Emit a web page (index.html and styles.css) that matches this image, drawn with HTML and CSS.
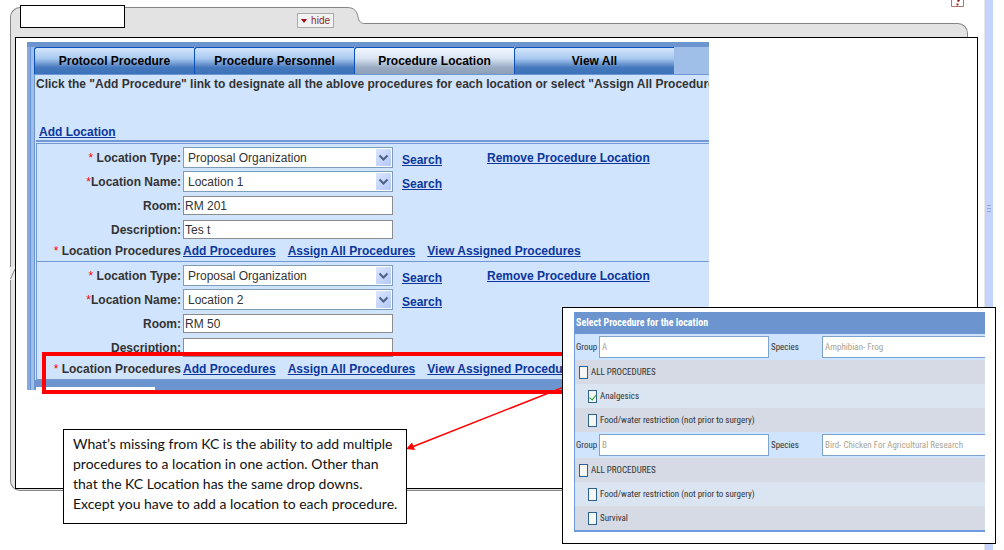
FILE: index.html
```html
<!DOCTYPE html>
<html lang="en">
<head>
<meta charset="utf-8">
<title>Procedure Location</title>
<link rel="stylesheet" href="styles.css">
</head>
<body>
<div class="page">
  <main class="folder">
    <header class="folder-head">
      <div class="folder-tab"><button class="hide-btn" type="button"><svg width="6" height="4" viewBox="0 0 6 4"><path d="M0 0h6L3 4z" fill="#a30d12"/></svg>hide</button></div>
      <svg class="folder-curve" width="22" height="30" viewBox="0 0 22 30"><path d="M0 .5C8 .5 10 5 11 10s3 6.500 7 6.500H22V30H0z" fill="#e3e3e3"/><path d="M0 .5C8 .5 10 5 11 10s3 6.500 7 6.500H22" fill="none" stroke="#858585"/></svg>
      <div class="folder-edge"></div>
    </header>
    <div class="folder-body">
      <div class="sheet">
        <section class="app">
          <nav class="tabs">
            <button type="button" class="tab">Protocol Procedure</button>
            <button type="button" class="tab">Procedure Personnel</button>
            <button type="button" class="tab current">Procedure Location</button>
            <button type="button" class="tab">View All</button>
          </nav>
          <div class="content">
            <div class="intro">
              <p>Click the "Add Procedure" link to designate all the ablove procedures for each location or select "Assign All Procedures</p>
              <a href="#">Add Location</a>
            </div>
            <div class="groups">
              <form class="group">
                <div class="row"><label for="type1"><i>*</i> Location Type:</label><span class="pick"><select id="type1"><option>Proposal Organization</option></select><svg width="15" height="17" viewBox="0 0 15 17"><path d="M3.500 6.500l4 4 4-4" fill="none" stroke="#4d6185" stroke-width="2"/></svg></span><a class="search" href="#">Search</a><a href="#">Remove Procedure Location</a></div>
                <div class="row"><label for="name1"><i>*</i>Location Name:</label><span class="pick"><select id="name1"><option>Location 1</option></select><svg width="15" height="17" viewBox="0 0 15 17"><path d="M3.500 6.500l4 4 4-4" fill="none" stroke="#4d6185" stroke-width="2"/></svg></span><a class="search" href="#">Search</a></div>
                <div class="row"><label for="room1">Room:</label><input id="room1" type="text" value="RM 201"></div>
                <div class="row"><label for="desc1">Description:</label><input id="desc1" type="text" value="Tes t"></div>
                <div class="row actions"><span class="caption"><i>*</i> Location Procedures</span><span class="links"><a href="#">Add Procedures</a><a href="#">Assign All Procedures</a><a href="#">View Assigned Procedures</a></span></div>
              </form>
              <form class="group">
                <div class="row"><label for="type2"><i>*</i> Location Type:</label><span class="pick"><select id="type2"><option>Proposal Organization</option></select><svg width="15" height="17" viewBox="0 0 15 17"><path d="M3.500 6.500l4 4 4-4" fill="none" stroke="#4d6185" stroke-width="2"/></svg></span><a class="search" href="#">Search</a><a href="#">Remove Procedure Location</a></div>
                <div class="row"><label for="name2"><i>*</i>Location Name:</label><span class="pick"><select id="name2"><option>Location 2</option></select><svg width="15" height="17" viewBox="0 0 15 17"><path d="M3.500 6.500l4 4 4-4" fill="none" stroke="#4d6185" stroke-width="2"/></svg></span><a class="search" href="#">Search</a></div>
                <div class="row"><label for="room2">Room:</label><input id="room2" type="text" value="RM 50"></div>
                <div class="row"><label for="desc2">Description:</label><input id="desc2" type="text"></div>
                <div class="row actions"><span class="caption"><i>*</i> Location Procedures</span><span class="links"><a href="#">Add Procedures</a><a href="#">Assign All Procedures</a><a href="#">View Assigned Procedures</a></span></div>
              </form>
            </div>
          </div>
          <div class="app-foot"><span></span></div>
        </section>
      </div>
    </div>
  </main>

  <div class="blank-tag"></div>
  <svg class="help" width="13" height="7" viewBox="0 0 13 7"><path d="M.5 0v6.500h12V0" fill="#fff" stroke="#b5736f"/><path d="M8.500 0L6.500 1.500" stroke="#9b2d29" stroke-width="2"/><path d="M5.500 3.500h2v2h-2z" fill="#9b2d29"/></svg>
  <div class="scroll-strip"><svg width="4" height="7" viewBox="0 0 4 7"><path d="M0 .5h4M0 3.500h4M0 6.500h4" stroke="#8fa7e4"/></svg></div>
  <svg class="nick" width="5" height="13" viewBox="0 0 5 13"><path d="M0 0h5v13H0z" fill="#ececec"/><path d="M.5 12L5 2" stroke="#888" fill="none"/></svg>

  <div class="highlight"></div>
  <svg class="arrow" width="158" height="66" viewBox="0 0 158 66"><path d="M158 0L6 60" stroke="#f00" stroke-width="1.500"/><path d="M0 62L6 55.500 9 63z" fill="#f00"/></svg>
  <p class="callout">What’s missing from KC is the ability to add multiple<br>procedures to a location in one action. Other than<br>that the KC Location has the same drop downs.<br>Except you have to add a location to each procedure.</p>

  <aside class="dialog">
    <form class="chooser">
      <h2>Select Procedure for the location</h2>
      <div class="species"><label for="ga">Group</label><input id="ga" type="text" value="A"><label for="sa">Species</label><input class="cut" id="sa" type="text" value="Amphibian- Frog"></div>
      <label class="check"><input type="checkbox">ALL PROCEDURES</label>
      <label class="check sub"><input type="checkbox" checked>Analgesics</label>
      <label class="check sub dark"><input type="checkbox">Food/water restriction (not prior to surgery)</label>
      <div class="species"><label for="gb">Group</label><input id="gb" type="text" value="B"><label for="sb">Species</label><input class="cut" id="sb" type="text" value="Bird- Chicken For Agricultural Research"></div>
      <label class="check"><input type="checkbox">ALL PROCEDURES</label>
      <label class="check sub"><input type="checkbox">Food/water restriction (not prior to surgery)</label>
      <label class="check sub dark"><input type="checkbox">Survival</label>
    </form>
  </aside>
</div>
</body>
</html>
```

FILE: styles.css
```css
* { box-sizing: border-box; }
body {
  margin: 0;
  background: #fff;
  color: #333;
  font: bold 12px/16px "Liberation Sans", Arial, sans-serif;
}
p, h2 { margin: 0; font-size: inherit; }
a { color: #0b369c; }
i { color: #f00; font-style: normal; font-weight: normal; }
button, input, select { font: inherit; }

.page { position: relative; min-height: 550px; padding: 7px 26px 0 10px; overflow: hidden; }

/* Folder frame */
.folder-head { display: flex; height: 30px; margin-right: 10px; }
.folder-tab {
  display: flex;
  align-items: flex-start;
  justify-content: flex-end;
  width: 337px;
  padding: 5px 13px 0 0;
  background: #e3e3e3;
  border: solid #858585;
  border-width: 1px 0 0 1px;
  border-radius: 10px 0 0 0;
}
.hide-btn {
  display: flex;
  align-items: center;
  gap: 4px;
  height: 15px;
  padding: 0 3px;
  background: #f3f3f3;
  border: 1px solid #aaa;
  color: #8c1d20;
  font-size: 10px;
  font-weight: normal;
}
.folder-curve { flex: none; }
.folder-edge {
  flex: 1;
  margin-top: 16px;
  background: #e3e3e3;
  border: solid #858585;
  border-width: 1px 1px 0 0;
  border-radius: 0 10px 0 0;
}
.folder-body {
  padding: 0 0 1px 4px;
  background: #e3e3e3;
  border: solid #858585;
  border-width: 0 0 1px 1px;
  border-radius: 0 0 0 10px;
}
.sheet { min-height: 452px; padding: 4px 0 0 11px; background: #fff; border: 1px solid #000; }

/* Application window */
.app {
  max-width: 682px;
  padding: 5px 0 0 7px;
  overflow: hidden;
  background: linear-gradient(#6c95cf 5px, transparent 5px), linear-gradient(90deg, #88abdf 3px, #6690cf 3px, #6690cf 4px, #9fbfe9 4px);
}
.tabs { display: flex; height: 28px; border-bottom: 1px solid #6f97d2; }
.tab {
  width: 160px;
  padding: 0;
  color: #000;
  background: linear-gradient(#d3e5fb, #a9c9f0 40%, #4679bd 75%, #3a72ba);
  border: solid #0b50b8;
  border-width: 1px 0 0 1px;
  border-radius: 3px 0 0 0;
}
.tab.current { background: linear-gradient(#f4f8ff, #d9e4f3 40%, #9aacc4 75%, #8d9fb5); }
.content { padding-left: 1px; background: #d1e4fe; border-left: 1px solid #6c95cf; }
.intro { display: flex; flex-direction: column; gap: 32px; height: 67px; padding-top: 1px; border-bottom: 2px solid #7399d4; white-space: nowrap; }
.intro a { align-self: flex-start; margin-left: 3px; }
.groups { margin-top: 1px; border: solid #7399d4; border-width: 1px 0 0 1px; }
.group { padding-top: 2px; border-bottom: 1px solid #7399d4; }
.row { display: flex; align-items: center; height: 24px; padding-bottom: 1px; }
.row label, .caption { width: 144px; margin-right: 2px; text-align: right; white-space: nowrap; }
.row input, .row select {
  width: 210px;
  height: 19px;
  padding: 0 1px;
  color: #333;
  background: #fff;
  border: 1px solid #8c8c8c;
  border-radius: 0;
  font-weight: normal;
}
.pick { position: relative; display: flex; }
.row select { height: 21px; padding: 0 4px; border-color: #7f9db9; appearance: none; }
.pick svg { position: absolute; top: 2px; right: 2px; background: linear-gradient(135deg, #dbe5ff, #b3c8fa); pointer-events: none; }
.search { width: 76px; margin-left: 9px; padding-top: 4px; }
.search + a { margin-left: 9px; }
.row.actions { height: 19px; padding: 0 0 2px; }
.links { display: flex; gap: 12px; white-space: nowrap; }
.app-foot { height: 10px; padding: 7px 0 0 2px; background: #6c95cf; }
.app-foot span { display: block; width: 119px; height: 3px; background: #fff; }

/* Pieces lying over the frame */
.blank-tag { position: absolute; left: 20px; top: 5px; width: 105px; height: 23px; background: #fff; border: 1px solid #000; }
.help { position: absolute; right: 40px; top: 0; }
.scroll-strip {
  position: absolute;
  top: 0;
  right: 11px;
  bottom: 0;
  display: flex;
  align-items: center;
  justify-content: center;
  width: 9px;
  padding-bottom: 134px;
  background: #c5d4fc;
  border-left: 1px solid #e9e6e6;
}
.nick { position: absolute; left: 10px; top: 267px; }
.highlight { position: absolute; left: 42px; top: 352px; width: 540px; height: 42px; border: 4px solid #f00; }
.arrow { position: absolute; left: 406px; top: 387px; }
.callout {
  position: absolute;
  left: 63px;
  top: 429px;
  width: 344px;
  height: 95px;
  padding: 4px 9px;
  background: #fff;
  border: 1px solid #000;
  color: #111;
  font: 14px/20px Lato, sans-serif;
  white-space: nowrap;
}

/* Procedure chooser */
.dialog {
  position: absolute;
  left: 562px;
  top: 307px;
  width: 434px;
  height: 237px;
  padding: 4px 10px 0 11px;
  background: #fff;
  border: 1px solid #000;
  font: 9px/14px "Roboto Condensed", "Liberation Sans", sans-serif;
}
.chooser { overflow: hidden; border: solid #6c9be0; border-width: 0 0 2px 1px; }
.chooser h2 { height: 22px; padding: 4px 1px; background: #6c95cf; color: #fff; font-size: 10px; }
.species { display: flex; align-items: center; height: 26px; background: #d1e4fe; }
.species label { flex: none; width: 24px; padding-left: 1px; white-space: nowrap; }
.species input { width: 170px; height: 22px; padding: 0 2px; background: #fff; border: 1px solid #7fa3cf; color: #aaa492; }
.species input + label { width: 53px; padding-left: 2px; }
.species .cut { flex: 1; min-width: 0; border-right: 0; }
.check { display: flex; align-items: center; gap: 3px; height: 24px; padding-left: 4px; background: #d5dae4; white-space: nowrap; }
.check.sub { padding-left: 13px; background: #dbe5f1; }
.check.dark { background: #d5dae4; }
.check input { display: grid; place-items: center; width: 9px; height: 13px; margin: 0; appearance: none; background: #f6f6f4; border: 1px solid #2c628f; }
.check input:checked::after { content: ""; width: 3px; height: 6px; border: solid #21a121; border-width: 0 1px 1px 0; rotate: 40deg; }
```
